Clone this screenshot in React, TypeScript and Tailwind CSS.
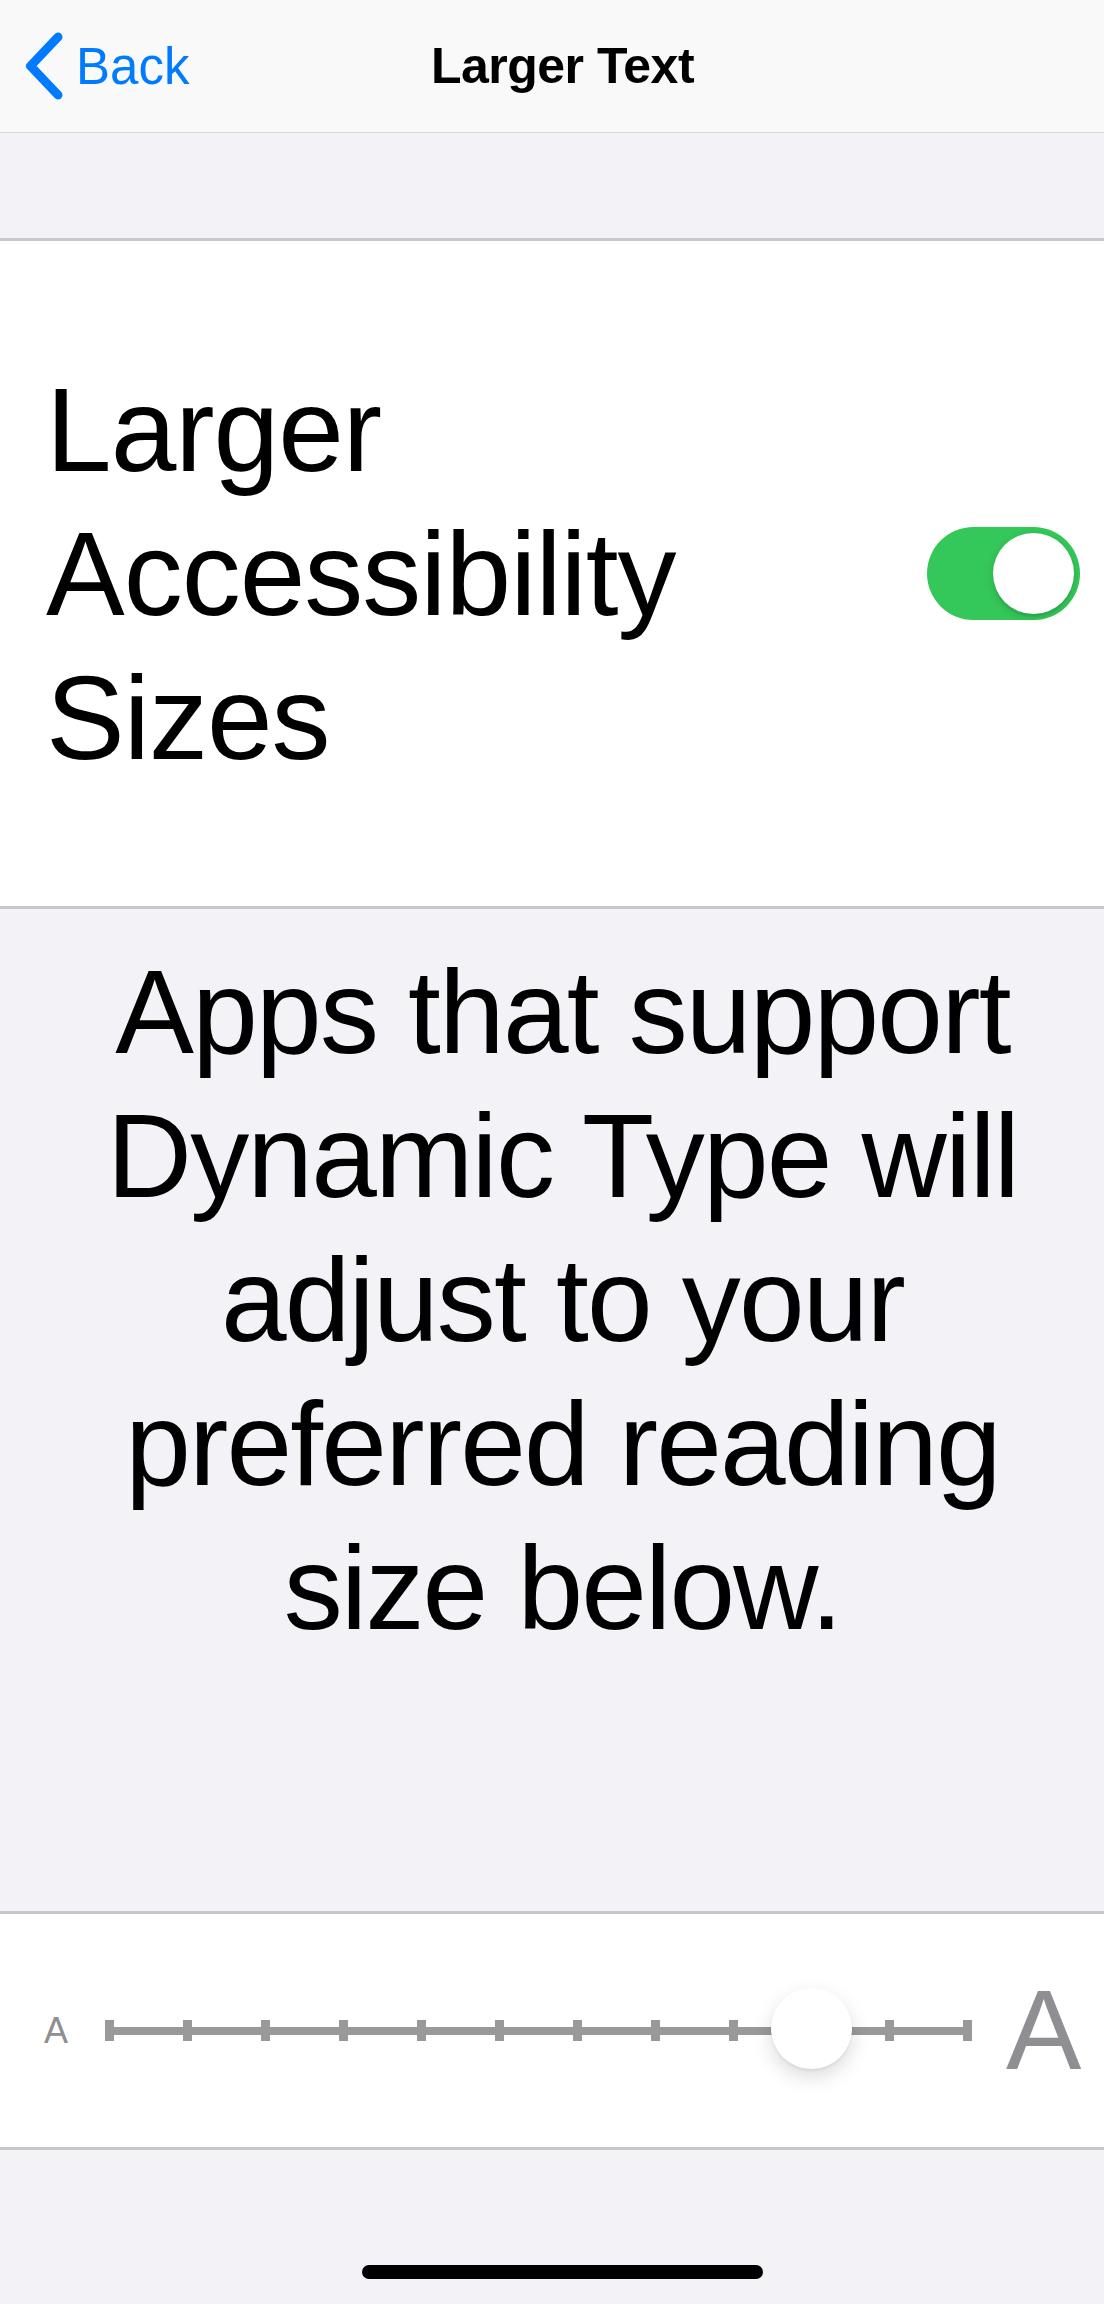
const ticks = Array.from({ length: 12 }, (_, i) => i);

const Toggle = () => (
  <div className="flex h-[93px] w-[153px] shrink-0 items-center justify-end rounded-full bg-[#34c759] px-[6px]">
    <div className="h-[81px] w-[81px] rounded-full bg-white shadow-[0_3px_8px_rgba(0,0,0,0.15),0_3px_1px_rgba(0,0,0,0.06)]" />
  </div>
);

const TextSizeSlider = () => (
  <div className="relative flex h-[21px] w-[867px] items-center justify-between">
    <div className="absolute inset-x-0 top-[7px] h-[8px] bg-[#999999]" />
    {ticks.map((t) => (
      <div key={t} className="relative h-[21px] w-[9px] bg-[#999999]" />
    ))}
    <div className="absolute left-[666px] top-[-32px] h-[81px] w-[81px] rounded-full bg-white shadow-[0_8px_20px_rgba(0,0,0,0.14),0_2px_3px_rgba(0,0,0,0.06)]" />
  </div>
);

export default function App() {
  return (
    <div className="h-[2304px] w-[1104px] overflow-hidden bg-[#f2f2f7] font-['Liberation_Sans',Arial,sans-serif] text-black">
      <div className="w-[1125px]">
        {/* nav bar */}
        <div className="relative flex h-[133px] items-center border-b border-[#d8d8dc] bg-[#f9f9f9]">
          <div className="flex items-center pl-[24px]">
            <svg width="40" height="70" viewBox="0 0 40 70" fill="none">
              <path
                d="M34 6 L6.5 35 L34 64"
                stroke="#007aff"
                strokeWidth="9"
                strokeLinecap="round"
                strokeLinejoin="round"
              />
            </svg>
            <span className="ml-[12px] text-[51px] leading-none text-[#007aff]">Back</span>
          </div>
          <div className="absolute inset-x-0 text-center text-[50px] font-semibold leading-none tracking-[-0.5px]">
            Larger Text
          </div>
        </div>

        <div className="h-[105px]" />

        {/* toggle row */}
        <div className="flex h-[671px] items-center justify-between border-y-[3px] border-[#c8c7cc] bg-white pl-[46px] pr-[45px]">
          <div className="text-[118px] leading-[144px] tracking-[-1px]">
            Larger
            <br />
            Accessibility
            <br />
            Sizes
          </div>
          <Toggle />
        </div>

        {/* footer text */}
        <div className="h-[1002px] px-[50px] pt-[31px] text-center text-[118px] leading-[144px] tracking-[-1.8px]">
          Apps that support Dynamic Type will adjust to your preferred reading size below.
        </div>

        {/* slider row */}
        <div className="flex h-[239px] items-center border-y-[3px] border-[#c8c7cc] bg-white pl-[44px]">
          <span className="text-[36px] leading-none text-[#8e8e93]">A</span>
          <div className="ml-[37px]">
            <TextSizeSlider />
          </div>
          <span className="ml-[34px] text-[113px] leading-none text-[#8e8e93]">A</span>
        </div>

        <div className="pt-[115px]">
          <div className="mx-auto h-[14px] w-[401px] rounded-full bg-black" />
        </div>
      </div>
    </div>
  );
}
